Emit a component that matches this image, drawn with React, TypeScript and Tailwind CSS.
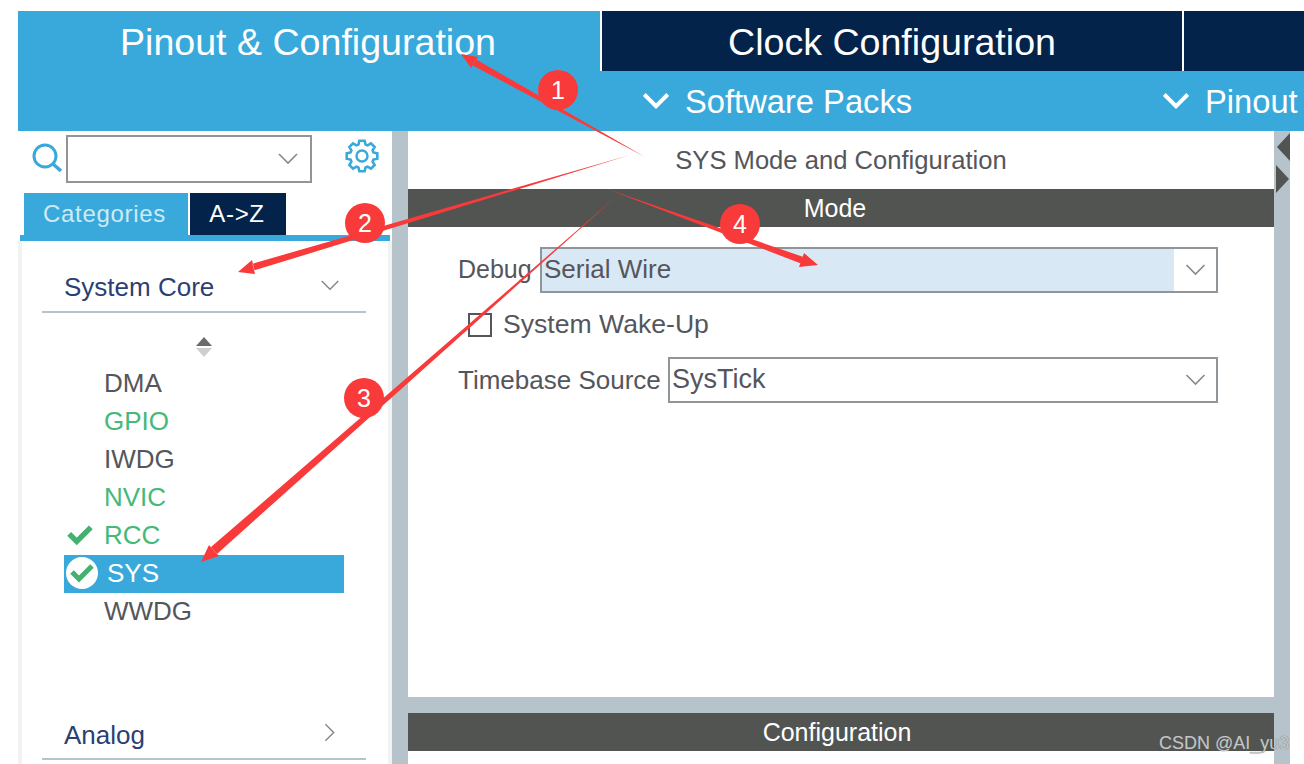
const peripherals = [
  { name: "DMA", tone: "text-[#55565c]" },
  { name: "GPIO", tone: "text-[#45b978]" },
  { name: "IWDG", tone: "text-[#55565c]" },
  { name: "NVIC", tone: "text-[#45b978]" },
  { name: "RCC", tone: "text-[#45b978]", check: true },
  { name: "SYS", tone: "text-white", selected: true },
  { name: "WWDG", tone: "text-[#55565c]" },
];

type Pt = [number, number];

function Chevron({ className, color = "#85898c", weight = 1.6 }: { className?: string; color?: string; weight?: number }) {
  return (
    <svg className={className} viewBox="0 0 20 12" fill="none" stroke={color} strokeWidth={weight}>
      <path d="M1 1l9 9 9-9" />
    </svg>
  );
}

function CheckMark({ className }: { className?: string }) {
  return (
    <svg className={className} viewBox="0 0 24 20" fill="none" stroke="#45b070" strokeWidth="5">
      <path d="M2 9l7 7L22 3" />
    </svg>
  );
}

// 8 tooth cog, the outline is worked out from the angle of each tooth
function gearPath() {
  const pts: string[] = [];
  for (let i = 0; i < 8; i++) {
    const a = (i * Math.PI) / 4;
    const corners: [number, number][] = [
      [12, a - 0.3],
      [15.5, a - 0.17],
      [15.5, a + 0.17],
      [12, a + 0.3],
    ];
    for (const [r, t] of corners) {
      pts.push(`${(17 + r * Math.sin(t)).toFixed(2)} ${(17 - r * Math.cos(t)).toFixed(2)}`);
    }
  }
  return `M${pts.join("L")}Z`;
}

function Gear({ className }: { className?: string }) {
  return (
    <svg className={className} viewBox="0 0 34 34" fill="none" stroke="#39a9dc">
      <path d={gearPath()} strokeWidth="2.6" />
      <circle cx="17" cy="17" r="5.5" strokeWidth="2.4" />
    </svg>
  );
}

function Select({ value, highlight, size }: { value: string; highlight?: boolean; size: string }) {
  return (
    <div className="flex h-[46px] flex-1 border-2 border-[#8f9599] bg-white">
      <div className={`flex-1 pl-[2px] leading-[40px] text-[#55565c] ${size} ${highlight ? "bg-[#d9e8f5]" : ""}`}>
        {value}
      </div>
      <div className="flex w-[42px] items-center justify-center">
        <Chevron className="h-[12px] w-[21px]" />
      </div>
    </div>
  );
}

// shaft tapers from a hair at the tail to full width where it meets the head
function arrowPoints(tail: Pt, tip: Pt, barbA: Pt, barbB: Pt, width: number) {
  const neck: Pt = [(barbA[0] + barbB[0]) / 2, (barbA[1] + barbB[1]) / 2];
  const dx = neck[0] - tail[0];
  const dy = neck[1] - tail[1];
  const len = Math.hypot(dx, dy);
  const nx = (-dy / len) * (width / 2);
  const ny = (dx / len) * (width / 2);
  const list: Pt[] = [tail, [neck[0] + nx, neck[1] + ny], barbB, tip, barbA, [neck[0] - nx, neck[1] - ny]];
  return list.map((p) => p.join(",")).join(" ");
}

const arrows: { tail: Pt; tip: Pt; a: Pt; b: Pt; w: number }[] = [
  { tail: [645, 157], tip: [461, 54], a: [478, 57], b: [471, 68], w: 7 },
  { tail: [630, 155], tip: [238, 272], a: [252, 260], b: [255, 274], w: 7 },
  { tail: [618, 195], tip: [201, 562], a: [209, 545], b: [219, 556], w: 9 },
  { tail: [607, 189], tip: [818, 265], a: [804, 253], b: [799, 267], w: 7 },
];

const badges = [
  { n: "1", x: 558, y: 90 },
  { n: "2", x: 365, y: 223 },
  { n: "3", x: 364, y: 398 },
  { n: "4", x: 740, y: 224 },
];

function Annotations() {
  return (
    <svg className="pointer-events-none absolute left-0 top-0" width="1304" height="764" viewBox="0 0 1304 764">
      {arrows.map((r, i) => (
        <polygon key={i} fill="#f93a3a" points={arrowPoints(r.tail, r.tip, r.a, r.b, r.w)} />
      ))}
      {badges.map((b) => (
        <g key={b.n}>
          <circle cx={b.x} cy={b.y} r="20" fill="#f93a3a" />
          <text x={b.x} y={b.y + 9} textAnchor="middle" fill="#fff" fontSize="25" fontFamily="'Liberation Sans', sans-serif">
            {b.n}
          </text>
        </g>
      ))}
    </svg>
  );
}

export default function App() {
  return (
    <div className="relative h-[764px] w-[1304px] overflow-hidden bg-white pl-[18px] pt-[11px] font-['Liberation_Sans',Arial,sans-serif]">
      {/* top tabs */}
      <div className="flex h-[60px] text-center text-[37.6px] leading-[62px] text-white">
        <div className="w-[582px] bg-[#39a9dc] pr-[2px]">Pinout &amp; Configuration</div>
        <div className="ml-[2px] w-[580px] bg-[#03234b]">Clock Configuration</div>
        <div className="ml-[2px] flex-1 bg-[#03234b]" />
      </div>
      {/* sub menu */}
      <div className="flex h-[60px] whitespace-nowrap bg-[#39a9dc] pl-[625px] text-[32.7px] leading-[62px] text-white">
        <div className="flex w-[520px] items-center gap-[16px]">
          <Chevron className="h-[16px] w-[26px]" color="#fff" weight={3} />
          <span className="mt-[2px]">Software Packs</span>
        </div>
        <div className="flex items-center gap-[16px]">
          <Chevron className="h-[16px] w-[26px]" color="#fff" weight={3} />
          <span className="mt-[2px]">Pinout</span>
        </div>
      </div>

      <div className="flex h-[633px]">
        {/* left panel */}
        <div className="w-[374px] bg-white">
          <div className="flex h-[62px] items-start pt-[4px]">
            <svg className="ml-[14px] mt-[8px] h-[30px] w-[30px]" viewBox="0 0 30 30" fill="none" stroke="#39a9dc">
              <circle cx="13" cy="13" r="11" strokeWidth="3" />
              <path d="M21 21l8 7" strokeWidth="3.5" />
            </svg>
            <div className="ml-[4px] flex h-[48px] w-[246px] items-center justify-end border-2 border-[#8f9599] pr-[12px]">
              <Chevron className="h-[12px] w-[20px]" />
            </div>
            <Gear className="ml-[33px] mt-[4px] h-[34px] w-[34px]" />
          </div>
          <div className="flex h-[42px] pl-[6px] text-[24px] leading-[42px] tracking-[0.7px] text-[#cdeaf6]">
            <div className="w-[164px] bg-[#39a9dc] pr-[3px] text-center">Categories</div>
            <div className="ml-[2px] w-[96px] bg-[#03234b] pr-[2px] text-center text-white">A-&gt;Z</div>
          </div>
          <div className="ml-[2px] h-[6px] w-[370px] bg-[#39a9dc]" />
          <div className="h-[523px] border-x-4 border-x-[#f0f2f4] px-[20px]">
            <div className="flex h-[72px] w-[324px] items-end justify-between border-b-2 border-b-[#b7c3ca] pb-[4px] pl-[22px] pr-[26px] text-[26px] text-[#2c3f74]">
              <span>System Core</span>
              <Chevron className="mb-[16px] h-[11px] w-[20px]" />
            </div>
            <div className="flex h-[52px] w-[324px] flex-col items-center justify-center pb-[6px] pt-[12px]">
              <div className="mt-[10px] h-0 w-0 border-x-[8px] border-b-[9px] border-x-transparent border-b-[#6b6b6b]" />
              <div className="mt-[2px] h-0 w-0 border-x-[8px] border-t-[9px] border-x-transparent border-t-[#cfcfcf]" />
            </div>
            <div className="w-[324px] pl-[22px]">
              {peripherals.map((p) => (
                <div
                  key={p.name}
                  className={`flex h-[38px] w-[280px] items-center pb-[2px] text-[26px] ${p.tone} ${p.selected ? "bg-[#39a9dc]" : ""}`}
                >
                  <div className="flex w-[40px] items-center justify-center">
                    {p.check && <CheckMark className="ml-[-8px] h-[22px] w-[26px]" />}
                    {p.selected && (
                      <div className="ml-[-4px] flex h-[32px] w-[32px] items-center justify-center rounded-full bg-white">
                        <CheckMark className="h-[20px] w-[24px]" />
                      </div>
                    )}
                  </div>
                  <span className={p.selected ? "ml-[3px]" : ""}>{p.name}</span>
                </div>
              ))}
            </div>
            <div className="mt-[81px] flex h-[48px] w-[324px] items-center justify-between border-b-2 border-b-[#b7c3ca] pl-[22px] pr-[26px] text-[26px] text-[#2c3f74]">
              <span>Analog</span>
              <Chevron className="mb-[6px] h-[11px] w-[20px] -rotate-90" />
            </div>
          </div>
        </div>

        {/* splitter */}
        <div className="w-[16px] bg-[#b7c3ca]" />

        {/* right panel */}
        <div className="w-[866px] bg-white">
          <div className="h-[58px] text-center text-[25.6px] leading-[58px] text-[#55565c]">SYS Mode and Configuration</div>
          <div className="h-[38px] bg-[#525452] pr-[12px] text-center text-[25px] leading-[38px] text-white">Mode</div>
          <div className="h-[470px] pl-[50px] pr-[56px] pt-[20px] text-[25px] text-[#55565c]">
            <div className="flex h-[46px] items-center">
              <span className="w-[82px]">Debug</span>
              <Select value="Serial Wire" size="text-[26px]" highlight />
            </div>
            <div className="mt-[20px] flex h-[24px] items-center pl-[10px]">
              <div className="h-[24px] w-[24px] border-2 border-[#55565c]" />
              <span className="ml-[11px] text-[26.6px]">System Wake-Up</span>
            </div>
            <div className="mt-[20px] flex h-[46px] items-center">
              <span className="w-[210px] whitespace-nowrap text-[26px]">Timebase Source</span>
              <Select value="SysTick" size="text-[27px]" />
            </div>
          </div>
          <div className="h-[16px] bg-[#b7c3ca]" />
          <div className="h-[38px] bg-[#525452] pr-[8px] text-center text-[25px] leading-[38px] text-white">Configuration</div>
        </div>

        <div className="w-[16px] bg-[#b7c3ca]">
          <div className="ml-[3px] mt-[2px] h-0 w-0 border-y-[14px] border-r-[13px] border-y-transparent border-r-[#525452]" />
          <div className="ml-[2px] mt-[4px] h-0 w-0 border-y-[14px] border-l-[13px] border-y-transparent border-l-[#525452]" />
        </div>
      </div>

      <Annotations />
      <div className="absolute left-[1159px] top-[733px] whitespace-nowrap text-[18px] leading-[20px] text-[#c4c6c6] [text-shadow:0_0_1px_#666]">CSDN @AI_yu3</div>
    </div>
  );
}
